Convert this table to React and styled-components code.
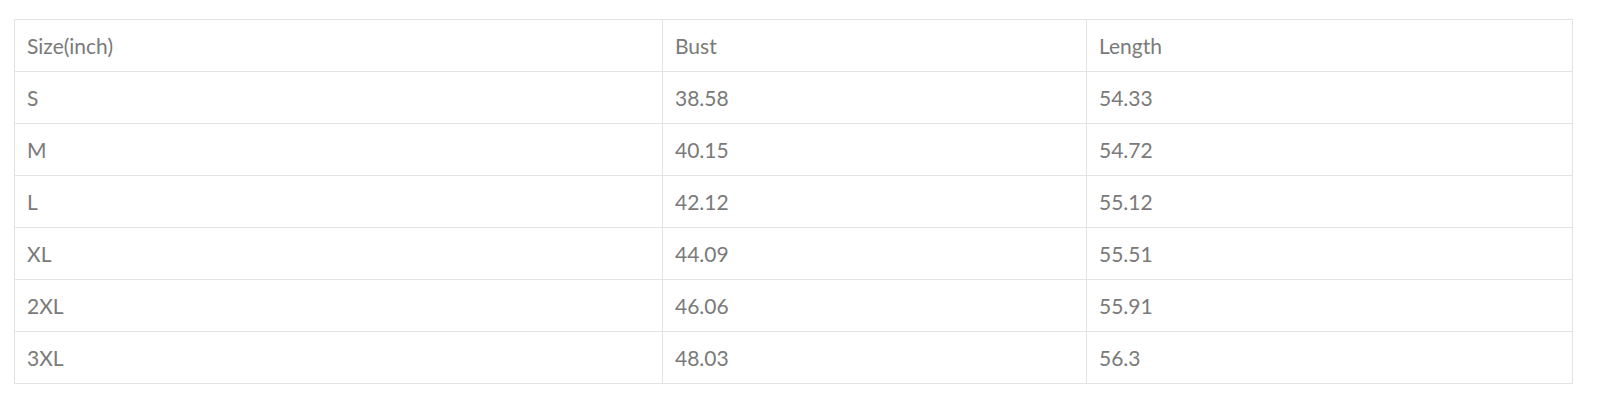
import React from "react";
import styled, { createGlobalStyle } from "styled-components";

const GlobalStyle = createGlobalStyle`
body{
margin:0;
background:#fff;
font-family:Lato, "Open Sans", sans-serif;
}`;

const Wrapper = styled.div`
padding:19px 28px 0 14px;
`;

const Table = styled.table`
width:1558px;
border-collapse:collapse;
table-layout:fixed;
`;

const Cell = styled.td`
border:1px solid #e3e3e3;
box-sizing:border-box;
height:52px;
padding:0 12px;
font-size:21px;
color:#7a7a7a;
text-align:left;
vertical-align:middle;
width:${({w}) => w}px;
`;

const rows = [
    ["Size(inch)", "Bust", "Length"],
    ["S", "38.58", "54.33"],
    ["M", "40.15", "54.72"],
    ["L", "42.12", "55.12"],
    ["XL", "44.09", "55.51"],
    ["2XL", "46.06", "55.91"],
    ["3XL", "48.03", "56.3"],
];

const widths = [648, 424, 486];

const App = () => {
    return (
        <Wrapper>
            <GlobalStyle />
            <Table>
                <tbody>
                    {rows.map((r, i) => (
                        <tr key={i}>
                            {r.map((c, j) => (
                                <Cell key={j} w={widths[j]}>{c}</Cell>
                            ))}
                        </tr>
                    ))}
                </tbody>
            </Table>
        </Wrapper>
    );
};

export default App;
